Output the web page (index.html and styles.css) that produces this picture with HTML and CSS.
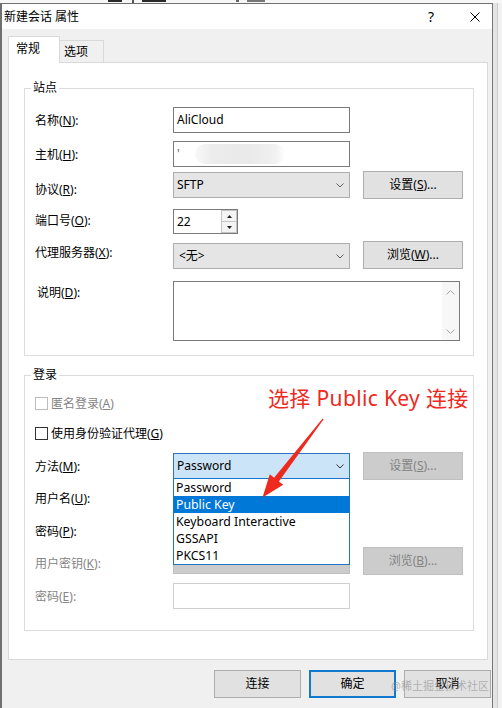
FILE: index.html
```html
<!DOCTYPE html>
<html lang="zh-CN">
<head>
<meta charset="utf-8">
<title>新建会话 属性</title>
<link rel="stylesheet" href="styles.css">
</head>
<body>
<div class="topstrip"><span class="frag f1"></span><span class="frag f2"></span><span class="frag f3"></span><span class="frag f4"></span><span class="frag f5"></span></div>
<div class="screen">
  <div class="window">
    <div class="titlebar">
      <span class="title">新建会话 属性</span>
      <span class="help">?</span>
      <span class="close"><svg width="10" height="10" viewBox="0 0 10 10"><path d="M0.5 0.5 L9.5 9.5 M9.5 0.5 L0.5 9.5" stroke="#000" stroke-width="1" fill="none"/></svg></span>
    </div>
    <div class="client">
      <div class="tabs">
        <div class="tab active">常规</div>
        <div class="tab">选项</div>
      </div>
      <div class="panel">
        <div class="group g1">
          <div class="legend">站点</div>
          <div class="row r1">
            <span class="lbl">名称(<u>N</u>):</span>
            <div class="edit">AliCloud</div>
          </div>
          <div class="row r2">
            <span class="lbl">主机(<u>H</u>):</span>
            <div class="edit host"><span class="tick">'</span><span class="blur"></span></div>
          </div>
          <div class="row r3">
            <span class="lbl">协议(<u>R</u>):</span>
            <div class="combo"><span>SFTP</span><svg class="chev" width="8" height="5" viewBox="0 0 8 5"><path d="M0.5 0.5 L4 4 L7.5 0.5" fill="none" stroke="#606060"/></svg></div>
            <div class="btn">设置(<u>S</u>)...</div>
          </div>
          <div class="row r4">
            <span class="lbl">端口号(<u>O</u>):</span>
            <div class="spin">
              <span class="spintext">22</span>
              <div class="spinbtns">
                <div class="sb"><svg width="5" height="3" viewBox="0 0 5 3"><path d="M0 3 L2.5 0 L5 3 Z" fill="#222"/></svg></div>
                <div class="sb"><svg width="5" height="3" viewBox="0 0 5 3"><path d="M0 0 L2.5 3 L5 0 Z" fill="#222"/></svg></div>
              </div>
            </div>
          </div>
          <div class="row r5">
            <span class="lbl">代理服务器(<u>X</u>):</span>
            <div class="combo"><span class="none">&lt;无&gt;</span><svg class="chev" width="8" height="5" viewBox="0 0 8 5"><path d="M0.5 0.5 L4 4 L7.5 0.5" fill="none" stroke="#606060"/></svg></div>
            <div class="btn">浏览(<u>W</u>)...</div>
          </div>
          <div class="row r6">
            <span class="lbl desc">说明(<u>D</u>):</span>
            <div class="memo">
              <div class="vscroll">
                <svg width="9" height="5" viewBox="0 0 9 5"><path d="M0.5 4.5 L4.5 0.5 L8.5 4.5" fill="none" stroke="#a6a6a6"/></svg>
                <svg width="9" height="5" viewBox="0 0 9 5"><path d="M0.5 0.5 L4.5 4.5 L8.5 0.5" fill="none" stroke="#a6a6a6"/></svg>
              </div>
            </div>
          </div>
        </div>
        <div class="group g2">
          <div class="legend">登录</div>
          <div class="cbrow c1 disabled"><span class="cb"></span><span class="cbtext">匿名登录(<u>A</u>)</span></div>
          <div class="cbrow c2"><span class="cb"></span><span class="cbtext">使用身份验证代理(<u>G</u>)</span></div>
          <div class="row m1">
            <span class="lbl">方法(<u>M</u>):</span>
            <div class="combo focus"><span>Password</span><svg class="chev" width="8" height="5" viewBox="0 0 8 5"><path d="M0.5 0.5 L4 4 L7.5 0.5" fill="none" stroke="#333"/></svg></div>
            <div class="btn off">设置(<u>S</u>)...</div>
          </div>
          <div class="row m2">
            <span class="lbl">用户名(<u>U</u>):</span>
            <div class="edit"></div>
          </div>
          <div class="row m3">
            <span class="lbl">密码(<u>P</u>):</span>
            <div class="edit"></div>
          </div>
          <div class="row m4 disabled">
            <span class="lbl">用户密钥(<u>K</u>):</span>
            <div class="combo off"></div>
            <div class="btn off">浏览(<u>B</u>)...</div>
          </div>
          <div class="row m5 disabled">
            <span class="lbl">密码(<u>E</u>):</span>
            <div class="edit offedit"></div>
          </div>
        </div>
      </div>
    </div>
    <div class="footer">
      <div class="btn fbtn">连接</div>
      <div class="btn fbtn default">确定</div>
      <div class="btn fbtn">取消</div>
    </div>

    <ul class="droplist">
      <li>Password</li>
      <li class="sel">Public Key</li>
      <li>Keyboard Interactive</li>
      <li>GSSAPI</li>
      <li>PKCS11</li>
    </ul>
    <div class="note">选择 Public Key 连接</div>
    <svg class="arrow" width="490" height="704" viewBox="2 4 490 704">
      <polygon points="323.6,419.2 278.9,481.5 283.2,484.8 262.5,497.5 269.8,474.3 274.1,477.8 322.6,418.6" fill="#ee2a1f"/>
    </svg>
    <div class="watermark">@稀土掘金技术社区</div>
  </div>
  <div class="outside"></div>
</div>
</body>
</html>
```

FILE: styles.css
```css
* { box-sizing: border-box; margin: 0; padding: 0; }
html, body { width: 502px; height: 708px; overflow: hidden; }
body {
  background: #e6e6e6;
  font-family: "Noto Sans", "Noto Sans CJK SC", sans-serif;
  font-size: 12px;
  color: #000;
}
u { text-decoration: underline; text-underline-offset: 1px; }

.topstrip { height: 3px; overflow: hidden; background: #f7f7f7; display: flex; align-items: flex-start; }
.frag { display: block; height: 2px; background: #2a2a2a; }
.f1 { width: 14px; margin-left: 108px; }
.f2 { width: 2px; height: 3px; margin-left: 10px; background: #555; }
.f3 { width: 24px; margin-left: 8px; }
.f4 { width: 3px; margin-left: 70px; background: #666; }
.f5 { width: 18px; margin-left: 8px; background: #777; }

.screen { display: flex; height: 705px; }
.window {
  position: relative;
  width: 493px; height: 705px;
  border-top: 1px solid #6f6f6f;
  border-left: 2px solid #707070;
  border-right: 1px solid #777;
  background: #f0f0f0;
  display: flex; flex-direction: column;
}
.outside {
  flex: 1;
  background: linear-gradient(to right, #e4e4e4 0 4px, #cdcdcd 4px 5px, #f2f2f2 5px);
}

.titlebar {
  height: 25px; background: #fff;
  display: flex; align-items: center; padding-left: 2px;
}
.title { flex: 1; line-height: 16px; }
.help { width: 20px; text-align: center; font-size: 14px; line-height: 16px; margin-right: 24px; }
.close { width: 20px; height: 10px; display: flex; justify-content: center; margin-right: 7px; }

.client { padding: 7px 4px 0 6px; }
.tabs {
  height: 27px; display: flex; align-items: flex-end;
  margin-bottom: -1px; position: relative; z-index: 1;
}
.tab {
  height: 22px; margin-bottom: 1px;
  border: 1px solid #d9d9d9; border-left: none; border-bottom: none;
  background: #f0f0f0; width: 44px;
  padding: 3px 0 0 4px; line-height: 16px;
}
.tab.active {
  height: 27px; margin-bottom: 0; width: 52px;
  border-left: 1px solid #d9d9d9;
  background: #fff; padding: 4px 0 0 7px;
}
.panel {
  background: #fff; border: 1px solid #d9d9d9;
  padding: 25px 13px 28px 15px;
}
.group { border: 1px solid #dcdcdc; padding: 0 0 14px 10px; }
.g2 { margin-top: 19px; padding-bottom: 21px; }
.legend {
  width: fit-content; margin: -9px 0 0 -4px; padding: 0 2px;
  background: #fff; line-height: 16px; height: 16px;
}

.row { display: flex; align-items: flex-start; }
.lbl { width: 138px; flex: none; line-height: 16px; white-space: nowrap; }
.r1 { margin-top: 11px; } .r1 .lbl { padding-top: 6px; }
.r2 { margin-top: 8px; }  .r2 .lbl { padding-top: 6px; }
.r3 { margin-top: 4px; }  .r3 .lbl { padding-top: 11px; } .r3 .combo { margin-top: 1px; }
.r4 { margin-top: 10px; } .r4 .lbl { padding-top: 4px; }
.r5 { margin-top: 7px; }  .r5 .lbl { padding-top: 4px; } .r5 .combo { margin-top: 2px; }
.r6 { margin-top: 12px; } .r6 .lbl { padding-top: 4px; }
.lbl.desc { padding-left: 2px; }

.edit {
  width: 177px; height: 26px; border: 1px solid #7a7a7a; background: #fff;
  padding-left: 3px; line-height: 24px; flex: none;
}
.edit.host { display: flex; align-items: center; }
.tick { width: 6px; color: #666; line-height: 16px; }
.blur {
  display: block; width: 90px; height: 20px; margin-left: 12px;
  background: linear-gradient(to right, #f8f8f8 0, #ececec 20%, #e9e9e9 60%, #f1f1f1 90%, #fff 100%);
  border-radius: 10px;
}
.edit.offedit { border-color: #cfcfcf; }
.combo {
  width: 177px; height: 26px; flex: none;
  border: 1px solid #adadad; background: #e5e5e5;
  display: flex; align-items: center; justify-content: space-between;
  padding: 0 5px 0 3px; line-height: 16px;
}
.combo .none { padding-left: 2px; }
.combo.focus { background: #cce4f7; border-color: #2b74c0; }
.combo.off { background: #cccccc; border-color: #bfbfbf; color: #8a8a8a; }
.btn {
  width: 100px; height: 28px; flex: none; margin-left: 13px;
  border: 1px solid #adadad; background: #e1e1e1;
  display: flex; align-items: center; justify-content: center; line-height: 16px;
}
.btn.off { background: #cccccc; border-color: #bfbfbf; color: #838383; }

.spin {
  width: 65px; height: 25px; flex: none; border: 1px solid #7a7a7a; background: #fff;
  display: flex;
}
.spintext { flex: 1; padding-left: 3px; line-height: 23px; }
.spinbtns { width: 16px; display: flex; flex-direction: column; }
.sb {
  flex: 1; border: 1px solid #c4c4c4; background: #f4f4f4;
  display: flex; align-items: center; justify-content: center;
}
.sb + .sb { border-top: none; }

.memo {
  width: 287px; height: 60px; flex: none; border: 1px solid #7a7a7a; background: #fff;
  display: flex; justify-content: flex-end;
}
.vscroll {
  width: 17px; background: #f7f7f7;
  display: flex; flex-direction: column; justify-content: space-between; align-items: center;
  padding: 8px 0 6px;
}

.cbrow { display: flex; align-items: center; height: 15px; }
.c1 { margin-top: 13px; }
.c2 { margin-top: 15px; }
.cb { width: 13px; height: 13px; border: 1px solid #333; background: #fff; flex: none; }
.cbtext { margin-left: 3px; line-height: 16px; }
.disabled { color: #858585; }
.disabled .cb { border-color: #bcbcbc; }

.m1 { margin-top: 11px; } .m1 .lbl { padding-top: 7px; } .m1 .combo { margin-top: 1px; }
.m2 { margin-top: 6px; }  .m2 .lbl { padding-top: 5px; }
.m3 { margin-top: 7px; }  .m3 .lbl { padding-top: 5px; }
.m4 { margin-top: 2px; }  .m4 .lbl { padding-top: 9px; } .m4 .combo { margin-top: 1px; }
.m5 { margin-top: 8px; }  .m5 .lbl { padding-top: 6px; }

.footer {
  display: flex; justify-content: flex-end; gap: 8px;
  padding: 10px 1px 0 0;
}
.fbtn { width: 87px; margin-left: 0; }
.fbtn.default { border: 2px solid #0f78d0; }

.droplist {
  position: absolute; left: 171px; top: 474px;
  width: 177px; height: 87px;
  border: 1px solid #1e73c6; background: #fff;
  list-style: none; z-index: 5;
  font-size: 12.3px;
}
.droplist li { height: 17px; line-height: 17px; padding-left: 2px; white-space: nowrap; }
.droplist li.sel { background: #0078d7; color: #fff; }

.note {
  position: absolute; left: 266px; top: 381px; z-index: 6;
  font-size: 21px; letter-spacing: 0.35px; line-height: 26px; color: #ec2a1e; white-space: nowrap;
}
.arrow { position: absolute; left: 0; top: 0; z-index: 7; pointer-events: none; }
.watermark {
  position: absolute; left: 389px; top: 675px; z-index: 8;
  font-size: 11px; line-height: 14px; color: rgba(140, 140, 140, 0.6); white-space: nowrap;
}
```
